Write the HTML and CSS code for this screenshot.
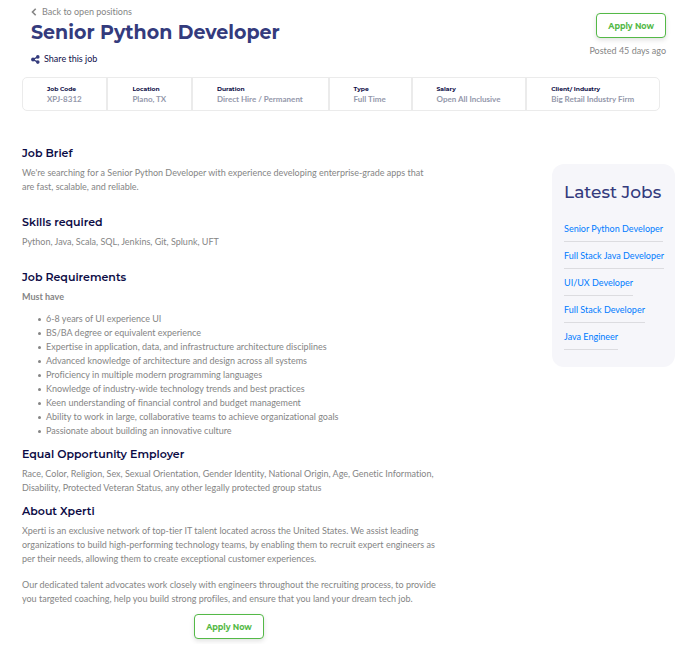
FILE: index.html
```html
<!DOCTYPE html>
<html lang="en">
<head>
    <meta charset="UTF-8">
    <meta name="viewport" content="width=device-width, initial-scale=1.0">
    <title>Senior Python Developer</title>
    <link rel="stylesheet" href="styles.css">
</head>
<body>
    <header class="job-header">
        <div class="job-title">
            <a class="back-link" href="#">
                <svg class="icon-back" viewBox="0 0 6 8" aria-hidden="true"><path d="M4.7 0.8L1.5 4l3.2 3.2" fill="none" stroke="currentColor" stroke-width="1.6"/></svg>
                Back to open positions
            </a>
            <h1>Senior Python Developer</h1>
            <button class="share-button" type="button">
                <svg class="icon-share" viewBox="0 0 9 9" aria-hidden="true"><path d="M6.8 1.9L2 4.5l4.8 2.6" fill="none" stroke="currentColor" stroke-width="1.4"/><circle cx="6.8" cy="1.9" r="1.8" fill="currentColor"/><circle cx="2" cy="4.5" r="1.9" fill="currentColor"/><circle cx="6.8" cy="7.1" r="1.8" fill="currentColor"/></svg>
                Share this job
            </button>
        </div>
        <div class="job-apply">
            <button class="apply-button" type="button">Apply Now</button>
            <span class="posted">Posted 45 days ago</span>
        </div>
    </header>

    <dl class="job-meta">
        <div class="meta-item"><dt>Job Code</dt><dd>XPJ-8312</dd></div>
        <div class="meta-item"><dt>Location</dt><dd>Plano, TX</dd></div>
        <div class="meta-item"><dt>Duration</dt><dd>Direct Hire / Permanent</dd></div>
        <div class="meta-item"><dt>Type</dt><dd>Full Time</dd></div>
        <div class="meta-item"><dt>Salary</dt><dd>Open All Inclusive</dd></div>
        <div class="meta-item"><dt>Client/ Industry</dt><dd>Big Retail Industry Firm</dd></div>
    </dl>

    <div class="job-body">
        <main class="job-content">
            <section class="block-wide">
                <h2>Job Brief</h2>
                <p>We're searching for a Senior Python Developer with experience developing enterprise-grade apps that are fast, scalable, and reliable.</p>
            </section>
            <section class="block-wide">
                <h2>Skills required</h2>
                <p>Python, Java, Scala, SQL, Jenkins, Git, Splunk, UFT</p>
            </section>
            <section class="block">
                <h2>Job Requirements</h2>
                <p><strong>Must have</strong></p>
                <ul>
                    <li>6-8 years of UI experience UI</li>
                    <li>BS/BA degree or equivalent experience</li>
                    <li>Expertise in application, data, and infrastructure architecture disciplines</li>
                    <li>Advanced knowledge of architecture and design across all systems</li>
                    <li>Proficiency in multiple modern programming languages</li>
                    <li>Knowledge of industry-wide technology trends and best practices</li>
                    <li>Keen understanding of financial control and budget management</li>
                    <li>Ability to work in large, collaborative teams to achieve organizational goals</li>
                    <li>Passionate about building an innovative culture</li>
                </ul>
            </section>
            <section class="block">
                <h2>Equal Opportunity Employer</h2>
                <p>Race, Color, Religion, Sex, Sexual Orientation, Gender Identity, National Origin, Age, Genetic Information, Disability, Protected Veteran Status, any other legally protected group status</p>
            </section>
            <section class="block">
                <h2>About Xperti</h2>
                <p>Xperti is an exclusive network of top-tier IT talent located across the United States. We assist leading organizations to build high-performing technology teams, by enabling them to recruit expert engineers as per their needs, allowing them to create exceptional customer experiences.</p>
                <p>Our dedicated talent advocates work closely with engineers throughout the recruiting process, to provide you targeted coaching, help you build strong profiles, and ensure that you land your dream tech job.</p>
            </section>
            <div class="content-apply">
                <button class="apply-button" type="button">Apply Now</button>
            </div>
        </main>

        <aside class="latest-jobs">
            <h2>Latest Jobs</h2>
            <a href="#">Senior Python Developer</a>
            <a href="#">Full Stack Java Developer</a>
            <a href="#">UI/UX Developer</a>
            <a href="#">Full Stack Developer</a>
            <a href="#">Java Engineer</a>
        </aside>
    </div>
</body>
</html>
```
FILE: styles.css
```css
* {
    box-sizing: border-box;
}

body {
    margin: 0;
    padding: 5px 21px 5px 22px;
    background: #fff;
    color: #858585;
    font-family: Lato, "Noto Sans", sans-serif;
    font-size: 9px;
    font-variant-ligatures: none;
    line-height: 14px;
}

h1,
h2,
p,
ul,
dl,
dd {
    margin: 0;
}

button {
    font-family: inherit;
    cursor: pointer;
}

/* header */
.job-header {
    display: flex;
    justify-content: space-between;
    padding: 0 9px;
}

.job-title {
    display: flex;
    flex-direction: column;
    align-items: flex-start;
}

.back-link {
    display: flex;
    align-items: center;
    gap: 5px;
    color: #858585;
    text-decoration: none;
}

.icon-back {
    width: 6px;
    height: 8px;
}

h1 {
    color: #343b7d;
    font-family: Montserrat, Inter, sans-serif;
    font-size: 19px;
    font-weight: 700;
    line-height: 28px;
}

.share-button {
    display: flex;
    align-items: center;
    gap: 4px;
    margin-top: 5px;
    padding: 0;
    border: none;
    background: none;
    color: #10104a;
    font-size: 9px;
    line-height: 14px;
}

.icon-share {
    width: 9px;
    height: 9px;
    color: #343b7d;
}

.job-apply {
    display: flex;
    flex-direction: column;
    align-items: flex-end;
    gap: 6px;
    padding-top: 8px;
}

.apply-button {
    height: 25px;
    padding: 0 11px;
    border: 1px solid #54b947;
    border-radius: 4px;
    background: #fff;
    box-shadow: 0 2px 5px rgba(0, 0, 0, 0.12);
    color: #54b947;
    font-family: Montserrat, Inter, sans-serif;
    font-size: 8px;
    font-weight: 700;
}

/* job facts */
.job-meta {
    display: flex;
    margin: 11px 15px 0 0;
    border: 1px solid #ebebeb;
    border-radius: 5px;
}

.meta-item {
    flex: 1 1 auto;
    padding: 6px 22px 6px 24px;
    border-right: 2px solid #ebebeb;
    white-space: nowrap;
}

.meta-item:last-child {
    border-right: none;
}

.meta-item dt {
    color: #0b0b45;
    font-family: Montserrat, Inter, sans-serif;
    font-size: 6px;
    font-weight: 700;
    line-height: 10px;
}

.meta-item dd {
    color: #9498ab;
    font-size: 8px;
    font-weight: 700;
    line-height: 10px;
}

/* content and sidebar */
.job-body {
    display: flex;
    justify-content: space-between;
    align-items: flex-start;
    padding-top: 34px;
}

.job-content {
    flex: 0 1 414px;
}

.job-content h2 {
    margin-bottom: 5px;
    color: #0b0b45;
    font-family: Montserrat, Inter, sans-serif;
    font-size: 11px;
    font-weight: 600;
    line-height: 16px;
}

.block-wide {
    margin-bottom: 20px;
}

.block {
    margin-bottom: 8px;
}

.job-content p + p {
    margin-top: 12px;
}

.job-content ul {
    margin-top: 8px;
    padding-left: 16px;
    list-style: none;
}

.job-content li {
    display: flex;
    align-items: center;
    gap: 5px;
}

.job-content li::before {
    content: "";
    flex: none;
    width: 3px;
    height: 3px;
    border-radius: 50%;
    background: #858585;
}

.content-apply {
    display: flex;
    justify-content: center;
}

.latest-jobs {
    display: flex;
    flex-direction: column;
    align-items: flex-start;
    gap: 7px;
    margin-top: 19px;
    padding: 16px 11px 17px 12px;
    border-radius: 12px;
    background: #f6f6fa;
}

.latest-jobs h2 {
    margin-bottom: 11px;
    color: #343b7d;
    font-family: Montserrat, Inter, sans-serif;
    font-size: 17px;
    font-weight: 500;
    line-height: 24px;
}

.latest-jobs a {
    padding-bottom: 5px;
    border-bottom: 1px solid #dcdce0;
    color: #007bff;
    text-decoration: none;
    white-space: nowrap;
}
```
